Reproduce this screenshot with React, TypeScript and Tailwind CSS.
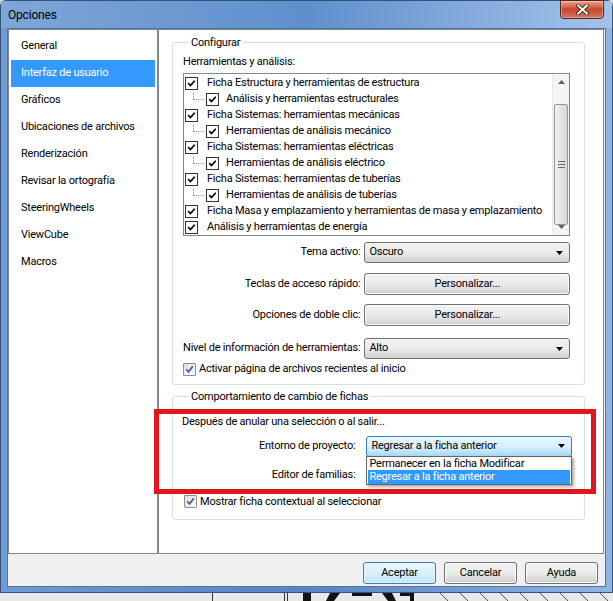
import React from "react";

const F = "font-['Roboto',sans-serif] text-[11px] tracking-[-0.22px] text-black";

function ClassicCheck() {
  return (
    <span className="w-[13px] h-[13px] shrink-0 border border-[#333333] bg-white flex items-center justify-center">
      <svg width="9" height="9" viewBox="0 0 9 9">
        <path d="M1.2 4.2 L3.5 6.5 L7.8 1.8" stroke="#000" strokeWidth="1.7" fill="none" />
      </svg>
    </span>
  );
}

function ThemedCheck() {
  return (
    <span className="w-[13px] h-[13px] shrink-0 border border-[#8e8f8f] rounded-[1px] bg-gradient-to-br from-[#dcdcdc] to-[#ffffff] flex items-center justify-center">
      <svg width="9" height="9" viewBox="0 0 9 9">
        <path d="M1.2 4.3 L3.6 6.8 L7.8 1.2" stroke="#4a5f97" strokeWidth="1.8" fill="none" />
      </svg>
    </span>
  );
}

function Arrow() {
  return (
    <svg width="7" height="4" viewBox="0 0 7 4" className="shrink-0">
      <path d="M0 0 L7 0 L3.5 4 Z" fill="#000" />
    </svg>
  );
}

function Select({ value, focused }: { value: string; focused?: boolean }) {
  return (
    <div
      className={
        "w-[206px] h-[21px] rounded-[3px] border flex items-center justify-between pl-[4px] pr-[6px] " +
        (focused
          ? "border-[#3c7fb1] bg-gradient-to-b from-[#eaf6fd] via-[#d9f0fc] to-[#a7d9f5]"
          : "border-[#707070] bg-gradient-to-b from-[#f2f2f2] via-[#ebebeb] to-[#d0d0d0]")
      }
    >
      <span>{value}</span>
      <Arrow />
    </div>
  );
}

function Btn({ label, w = "w-[206px]", def }: { label: string; w?: string; def?: boolean }) {
  return (
    <div
      className={
        w +
        " h-[22px] rounded-[3px] border flex items-center justify-center " +
        (def
          ? "border-[#3c7fb1] bg-gradient-to-b from-[#eaf6fd] via-[#d9f0fc] to-[#bee6fd] shadow-[inset_0_0_0_1px_#dff2fc]"
          : "border-[#707070] bg-gradient-to-b from-[#f2f2f2] via-[#ebebeb] to-[#cfcfcf] shadow-[inset_0_0_0_1px_#fcfcfc]")
      }
    >
      {label}
    </div>
  );
}

const navItems = [
  "General",
  "Interfaz de usuario",
  "Gráficos",
  "Ubicaciones de archivos",
  "Renderización",
  "Revisar la ortografía",
  "SteeringWheels",
  "ViewCube",
  "Macros",
];

const rows: [string, boolean][] = [
  ["Ficha Estructura y herramientas de estructura", false],
  ["Análisis y herramientas estructurales", true],
  ["Ficha Sistemas: herramientas mecánicas", false],
  ["Herramientas de análisis mecánico", true],
  ["Ficha Sistemas: herramientas eléctricas", false],
  ["Herramientas de análisis eléctrico", true],
  ["Ficha Sistemas: herramientas de tuberías", false],
  ["Herramientas de análisis de tuberías", true],
  ["Ficha Masa y emplazamiento y herramientas de masa y emplazamiento", false],
  ["Análisis y herramientas de energía", false],
];

export default function App() {
  return (
    <div className={"w-[613px] h-[601px] overflow-hidden flex flex-col bg-[#d8d8d8] " + F}>
      {/* window */}
      <div className="h-[593px] shrink-0 flex flex-col rounded-t-[6px] border border-[#34527a] bg-gradient-to-r from-[#6f9ad1] via-[#5585c4] to-[#8fb5e2]">
        {/* title bar */}
        <div className="h-[27px] shrink-0 flex items-start justify-between pl-[7px] pr-[8px] bg-gradient-to-r from-[#7ea6d8] via-[#5f8fcc] to-[#a3c3e9]">
          <span className="mt-[5px] text-[12px] tracking-[-0.2px] text-black">Opciones</span>
          <div className="w-[44px] h-[19px] -mt-[1px] rounded-b-[4px] border border-[#5a1d17] bg-gradient-to-b from-[#e8a493] via-[#c7452f] to-[#d0785a] flex items-center justify-center shadow-[inset_0_0_0_1px_rgba(255,255,255,0.35)]">
            <svg width="13" height="11" viewBox="0 0 13 11">
              <path d="M2 1.5 L11 9.5 M11 1.5 L2 9.5" stroke="#3a1a12" strokeWidth="3.6" strokeLinecap="square" />
              <path d="M2 1.5 L11 9.5 M11 1.5 L2 9.5" stroke="#ffffff" strokeWidth="2" strokeLinecap="square" />
            </svg>
          </div>
        </div>
        {/* client */}
        <div className="flex-1 mx-[6px] mb-[5px] border border-[#51749f] bg-[#f0f0f0] flex flex-col">
          <div className="h-[525px] shrink-0 flex">
            {/* nav */}
            <div className="w-[150px] shrink-0 border border-[#828790] bg-white pt-[3px] px-[2px]">
              {navItems.map((n, i) => (
                <div
                  key={n}
                  className={
                    "h-[27px] flex items-center pl-[10px] " +
                    (i === 1 ? "bg-[#3399ff] text-white" : "")
                  }
                >
                  {n}
                </div>
              ))}
            </div>
            {/* right panel */}
            <div className="flex-1 mr-[1px] border border-[#828790] bg-white relative pt-[5px] pl-[13px] pr-[18px]">
              <fieldset className="border border-[#d5dfe5] rounded-[3px] pl-[10px] pr-[14px] pb-[6px]">
                <legend className="ml-[6px] px-[2px] leading-[15px]">Configurar</legend>
                <div className="mt-[4px] leading-[16px]">Herramientas y análisis:</div>
                <div className="mt-[3px] h-[163px] border border-[#828790] bg-white flex">
                  <div className="flex-1 pl-[1px] pt-[1px]">
                    {rows.map(([t, child]) => (
                      <div key={t} className="h-[16px] flex items-center whitespace-nowrap">
                        {child ? (
                          <>
                            <span className="w-[13px] h-[16px] relative shrink-0 ml-[8px]">
                              <span className="absolute left-0 top-[2px] h-[6px] border-l border-dotted border-[#a0a0a0]" />
                              <span className="absolute left-0 top-[8px] w-[12px] border-t border-dotted border-[#a0a0a0]" />
                            </span>
                            <ClassicCheck />
                            <span className="ml-[7px]">{t}</span>
                          </>
                        ) : (
                          <>
                            <ClassicCheck />
                            <span className="ml-[9px]">{t}</span>
                          </>
                        )}
                      </div>
                    ))}
                  </div>
                  {/* scrollbar */}
                  <div className="w-[17px] shrink-0 flex flex-col bg-[#f4f4f4] border-l border-[#e8e8e8]">
                    <div className="h-[17px] flex items-center justify-center">
                      <svg width="7" height="4" viewBox="0 0 7 4"><path d="M0 4 L7 4 L3.5 0 Z" fill="#606060" /></svg>
                    </div>
                    <div className="mt-[13px] mx-[1px] h-[122px] rounded-[2px] border border-[#979797] bg-gradient-to-r from-[#f2f2f2] to-[#d6d6d6] flex items-center justify-center">
                      <div className="flex flex-col gap-[2px]">
                        <div className="w-[7px] h-[1px] bg-[#6a6a6a]" />
                        <div className="w-[7px] h-[1px] bg-[#6a6a6a]" />
                        <div className="w-[7px] h-[1px] bg-[#6a6a6a]" />
                      </div>
                    </div>
                    <div className="flex-1 flex items-end justify-center pb-[6px]">
                      <svg width="7" height="4" viewBox="0 0 7 4"><path d="M0 0 L7 0 L3.5 4 Z" fill="#606060" /></svg>
                    </div>
                  </div>
                </div>
                <div className="mt-[6px] flex items-center justify-end gap-[4px] whitespace-nowrap">
                  <span>Tema activo:</span>
                  <Select value="Oscuro" />
                </div>
                <div className="mt-[10px] flex items-center justify-end gap-[4px] whitespace-nowrap">
                  <span>Teclas de acceso rápido:</span>
                  <Btn label="Personalizar..." />
                </div>
                <div className="mt-[9px] flex items-center justify-end gap-[4px] whitespace-nowrap">
                  <span>Opciones de doble clic:</span>
                  <Btn label="Personalizar..." />
                </div>
                <div className="mt-[12px] flex items-center justify-end gap-[4px] whitespace-nowrap">
                  <span className="shrink-0">Nivel de información de herramientas:</span>
                  <Select value="Alto" />
                </div>
                <div className="mt-[2px] flex items-center gap-[3px] whitespace-nowrap">
                  <ThemedCheck />
                  <span>Activar página de archivos recientes al inicio</span>
                </div>
              </fieldset>

              <fieldset className="mt-[4px] border border-[#d5dfe5] rounded-[3px] pl-[9px] pr-[12px] pb-[9px]">
                <legend className="ml-[7px] px-[2px] leading-[15px]">Comportamiento de cambio de fichas</legend>
                <div className="mt-[10px] leading-[16px]">Después de anular una selección o al salir...</div>
                <div className="mt-[6px] flex items-center justify-end gap-[11px] whitespace-nowrap">
                  <span>Entorno de proyecto:</span>
                  <div className="relative">
                    <Select value="Regresar a la ficha anterior" focused />
                    {/* dropdown */}
                    <div className="absolute left-0 top-[20px] w-[206px] h-[29px] z-10 border border-[#646464] bg-white shadow-[2px_2px_3px_rgba(0,0,0,0.35)] flex flex-col px-[1px]">
                      <div className="h-[13px] leading-[13px] pl-[1px] whitespace-nowrap">Permanecer en la ficha Modificar</div>
                      <div className="h-[14px] leading-[14px] pl-[1px] bg-[#3399ff] text-white">Regresar a la ficha anterior</div>
                    </div>
                  </div>
                </div>
                <div className="mt-[8px] flex items-center justify-end gap-[11px] whitespace-nowrap">
                  <span>Editor de familias:</span>
                  <div className="w-[206px] h-[21px]" />
                </div>
                <div className="mt-[8px] flex items-center gap-[3px] whitespace-nowrap pl-[2px]">
                  <ThemedCheck />
                  <span>Mostrar ficha contextual al seleccionar</span>
                </div>
              </fieldset>

              {/* red highlight */}
              <div className="absolute left-[-5px] top-[379px] w-[442px] h-[85px] border-[5px] border-[#e2151f] pointer-events-none z-20" />
            </div>
          </div>
          {/* buttons */}
          <div className="flex-1 flex items-start justify-end gap-[8px] pt-[8px] pr-[7px]">
            <Btn label="Aceptar" w="w-[73px]" def />
            <Btn label="Cancelar" w="w-[73px]" />
            <Btn label="Ayuda" w="w-[73px]" />
          </div>
        </div>
      </div>
      {/* what lies behind the window */}
      <div className="flex-1 bg-[#e9e9e9] relative">
        <svg width="613" height="8" viewBox="0 0 613 8" className="absolute left-0 top-0">
          <rect x="212" y="0" width="1" height="8" fill="#333" />
          <rect x="284" y="0" width="1" height="8" fill="#333" />
          <rect x="287" y="0" width="1" height="8" fill="#333" />
          <path d="M303 0 h8 v8 h-8 Z M330 0 h10 l-6 8 h-8 Z M352 0 h20 v3 h-20 Z M382 0 h10 l4 8 h-8 Z M400 0 h14 v8 h-4 v-5 h-10 Z" fill="#111" />
          {[440, 460, 480, 500, 520, 540, 560, 580, 600].map((x) => (
            <path key={x} d={`M${x} 0 L${x + 8} 8`} stroke="#555" strokeWidth="1" />
          ))}
        </svg>
      </div>
    </div>
  );
}
